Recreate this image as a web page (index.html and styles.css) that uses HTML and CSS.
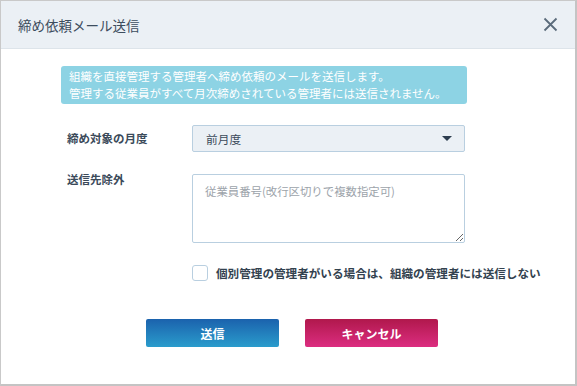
FILE: index.html
```html
<!DOCTYPE html>
<html lang="ja">
<head>
    <meta charset="UTF-8">
    <meta name="viewport" content="width=device-width, initial-scale=1.0">
    <title>締め依頼メール送信</title>
    <link rel="stylesheet" href="styles.css">
</head>
<body>
    <div class="dialog">
        <div class="dialog-header">
            <h1>締め依頼メール送信</h1>
            <button class="close-btn" aria-label="閉じる">
                <svg width="15" height="15" viewBox="0 0 15 15">
                    <path d="M1.5 1.5 L13.5 13.5 M13.5 1.5 L1.5 13.5" stroke="#5b6b7b" stroke-width="1.8" fill="none"/>
                </svg>
            </button>
        </div>
        <div class="dialog-body">
            <div class="notice">
                組織を直接管理する管理者へ締め依頼のメールを送信します。<br>
                管理する従業員がすべて月次締めされている管理者には送信されません。
            </div>

            <div class="form-row">
                <label class="form-label">締め対象の月度</label>
                <div class="select-box">
                    <span>前月度</span>
                    <span class="caret"></span>
                </div>
            </div>

            <div class="form-row">
                <label class="form-label">送信先除外</label>
                <textarea class="text-area" placeholder="従業員番号(改行区切りで複数指定可)"></textarea>
            </div>

            <div class="check-row">
                <span class="check-box"></span>
                <span class="check-label">個別管理の管理者がいる場合は、組織の管理者には送信しない</span>
            </div>

            <div class="actions">
                <button class="btn btn-send">送信</button>
                <button class="btn btn-cancel">キャンセル</button>
            </div>
        </div>
    </div>
</body>
</html>
```

FILE: styles.css
```css
body {
    margin: 0;
    font-family: "Noto Sans CJK JP", "Noto Sans", sans-serif;
    background-color: #ffffff;
}

.dialog {
    width: 577px;
    height: 386px;
    box-sizing: border-box;
    border-top: 1px solid #c9c9c9;
    border-left: 1px solid #c9c9c9;
    border-right: 2px solid #c4c4c4;
    border-bottom: 2px solid #c4c4c4;
    background-color: white;
}

.dialog-header {
    height: 47px;
    background-color: #ebf0f5;
    border-bottom: 1px solid #dde4ea;
    display: flex;
    align-items: center;
    justify-content: space-between;
    padding: 0 17px 0 17px;
}

.dialog-header h1 {
    margin: 0;
    font-size: 13.5px;
    font-weight: normal;
    color: #3d4d5e;
}

.close-btn {
    background: none;
    border: none;
    padding: 0;
    display: flex;
    cursor: pointer;
}

.dialog-body {
    padding: 17px 0 0 60px;
}

.notice {
    width: 398px;
    background-color: #8dd3e4;
    border-radius: 3px;
    color: white;
    font-size: 11.5px;
    line-height: 17px;
    padding: 2px 0 2px 8px;
}

.form-row {
    display: flex;
    align-items: flex-start;
    margin-top: 21px;
}

.form-row + .form-row {
    margin-top: 22px;
}

.form-label {
    width: 125px;
    padding-left: 6px;
    font-size: 11.5px;
    font-weight: bold;
    color: #3b4a5a;
    line-height: 26px;
}

.form-row + .form-row .form-label {
    line-height: 10px;
}

.select-box {
    width: 273px;
    height: 27px;
    box-sizing: border-box;
    background-color: #ebf0f5;
    border: 1px solid #b9cfe0;
    border-radius: 2px;
    display: flex;
    align-items: center;
    justify-content: space-between;
    padding: 0 12px 0 13px;
    font-size: 11.7px;
    color: #3b4a5a;
}

.caret {
    width: 0;
    height: 0;
    border-left: 5px solid transparent;
    border-right: 5px solid transparent;
    border-top: 5px solid #2d3d4f;
}

.text-area {
    width: 273px;
    height: 69px;
    box-sizing: border-box;
    border: 1px solid #b9cfe0;
    border-radius: 2px;
    padding: 8px 12px;
    font-family: inherit;
    font-size: 11.4px;
    color: #3b4a5a;
    resize: vertical;
}

.text-area::placeholder {
    color: #9ca3aa;
}

.check-row {
    display: flex;
    align-items: center;
    margin: 22px 0 0 131px;
}

.check-box {
    width: 14px;
    height: 14px;
    border: 1.5px solid #b9cfe0;
    border-radius: 3px;
    margin-right: 8px;
}

.check-label {
    font-size: 11.6px;
    font-weight: bold;
    color: #33424f;
}

.actions {
    display: flex;
    gap: 26px;
    margin: 38px 0 0 85px;
}

.btn {
    width: 133px;
    height: 28px;
    border: none;
    border-radius: 2px;
    color: white;
    font-family: inherit;
    font-size: 12px;
    font-weight: bold;
    cursor: pointer;
}

.btn-send {
    background: linear-gradient(#1b62ad, #2a9ccc);
}

.btn-cancel {
    background: linear-gradient(#b0184c, #dc2d80);
}
```
